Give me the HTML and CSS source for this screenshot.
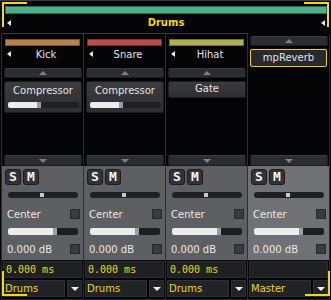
FILE: index.html
```html
<!DOCTYPE html>
<html>
<head>
<link rel="stylesheet" href="styles.css">
</head>
<body>

<div class="mixer">
  <!-- 总线标题 -->
  <div class="bus-head">
    <div class="bus-color"></div>
    <div class="bus-name">
      <span class="arrow-left"></span>
      <span class="bus-title">Drums</span>
      <span class="arrow-left"></span>
    </div>
  </div>

  <!-- 通道条 -->
  <div class="strips">
    <div class="strip">
      <div class="strip-top">
        <div class="color-bar" style="background:#b6814f"></div>
        <div class="name-row"><span class="arrow-left"></span><span class="name">Kick</span></div>
        <div class="scroll-btn"><span class="tri-up"></span></div>
        <div class="fx-btn">
          <span class="fx-name">Compressor</span>
          <div class="fx-slider"><div class="fill" style="width:29px"></div><div class="knob"></div></div>
        </div>
        <div class="spacer"></div>
        <div class="scroll-btn down"><span class="tri-down"></span></div>
      </div>
      <div class="panel">
        <div class="sm-row"><span class="sm-btn">S</span><span class="sm-btn">M</span></div>
        <div class="pan-slider"><div class="pan-knob"></div></div>
        <div class="param-row"><span>Center</span><span class="check"></span></div>
        <div class="vol-slider"><div class="fill" style="width:45px"></div><div class="knob"></div></div>
        <div class="param-row"><span>0.000 dB</span><span class="check"></span></div>
      </div>
      <div class="delay-box">0.000 ms</div>
      <div class="route"><span class="route-name">Drums</span><span class="route-btn"><span class="tri-down white"></span></span></div>
    </div>

    <div class="strip">
      <div class="strip-top">
        <div class="color-bar" style="background:#b84d4d"></div>
        <div class="name-row"><span class="arrow-left"></span><span class="name">Snare</span></div>
        <div class="scroll-btn"><span class="tri-up"></span></div>
        <div class="fx-btn">
          <span class="fx-name">Compressor</span>
          <div class="fx-slider"><div class="fill" style="width:29px"></div><div class="knob"></div></div>
        </div>
        <div class="spacer"></div>
        <div class="scroll-btn down"><span class="tri-down"></span></div>
      </div>
      <div class="panel">
        <div class="sm-row"><span class="sm-btn">S</span><span class="sm-btn">M</span></div>
        <div class="pan-slider"><div class="pan-knob"></div></div>
        <div class="param-row"><span>Center</span><span class="check"></span></div>
        <div class="vol-slider"><div class="fill" style="width:45px"></div><div class="knob"></div></div>
        <div class="param-row"><span>0.000 dB</span><span class="check"></span></div>
      </div>
      <div class="delay-box">0.000 ms</div>
      <div class="route"><span class="route-name">Drums</span><span class="route-btn"><span class="tri-down white"></span></span></div>
    </div>

    <div class="strip">
      <div class="strip-top">
        <div class="color-bar" style="background:#aeb04c"></div>
        <div class="name-row"><span class="arrow-left"></span><span class="name">Hihat</span></div>
        <div class="scroll-btn"><span class="tri-up"></span></div>
        <div class="fx-btn short">
          <span class="fx-name">Gate</span>
        </div>
        <div class="spacer"></div>
        <div class="scroll-btn down"><span class="tri-down"></span></div>
      </div>
      <div class="panel">
        <div class="sm-row"><span class="sm-btn">S</span><span class="sm-btn">M</span></div>
        <div class="pan-slider"><div class="pan-knob"></div></div>
        <div class="param-row"><span>Center</span><span class="check"></span></div>
        <div class="vol-slider"><div class="fill" style="width:45px"></div><div class="knob"></div></div>
        <div class="param-row"><span>0.000 dB</span><span class="check"></span></div>
      </div>
      <div class="delay-box">0.000 ms</div>
      <div class="route"><span class="route-name">Drums</span><span class="route-btn"><span class="tri-down white"></span></span></div>
    </div>

    <div class="strip master">
      <div class="strip-top">
        <div class="scroll-btn"><span class="tri-up"></span></div>
        <div class="fx-btn selected">
          <span class="fx-name">mpReverb</span>
        </div>
        <div class="spacer"></div>
        <div class="scroll-btn down"><span class="tri-down"></span></div>
      </div>
      <div class="panel">
        <div class="sm-row"><span class="sm-btn">S</span><span class="sm-btn">M</span></div>
        <div class="pan-slider"><div class="pan-knob"></div></div>
        <div class="param-row"><span>Center</span><span class="check"></span></div>
        <div class="vol-slider"><div class="fill" style="width:45px"></div><div class="knob"></div></div>
        <div class="param-row"><span>0.000 dB</span><span class="check"></span></div>
      </div>
      <div class="delay-box"></div>
      <div class="route"><span class="route-name">Master</span><span class="route-btn"><span class="tri-down white"></span></span></div>
    </div>
  </div>

  <!-- 选中框角标 -->
  <div class="corner tl"></div>
  <div class="corner tr"></div>
  <div class="corner bl"></div>
  <div class="corner br"></div>
</div>

</body>
</html>
```

FILE: styles.css
```css
/* 主样式 */
body {
  margin: 0;
  background: #040406;
}
.mixer {
  position: relative;
  width: 331px;
  height: 300px;
  background: #040406;
  border-top: 1px solid #3a3b3e;
  box-sizing: border-box;
  font-family: "DejaVu Sans", sans-serif;
  font-size: 10px;
  color: #e4e4e4;
  overflow: hidden;
}

/* 总线标题 */
.bus-head {
  height: 32px;
  padding-top: 5px;
  box-sizing: border-box;
}
.bus-color {
  height: 8px;
  margin: 0 4px 0 5px;
  background: #4fae8b;
  border: 1px solid #2c6a53;
  box-sizing: border-box;
}
.bus-name {
  display: flex;
  align-items: center;
  justify-content: space-between;
  height: 17px;
  padding: 0 6px 0 7px;
}
.bus-title {
  color: #f2d619;
  font-weight: bold;
}

/* 三角形 */
.arrow-left {
  width: 0;
  height: 0;
  border-top: 3px solid transparent;
  border-bottom: 3px solid transparent;
  border-right: 4px solid #e8e8e8;
}
.tri-up {
  width: 0;
  height: 0;
  border-left: 4px solid transparent;
  border-right: 4px solid transparent;
  border-bottom: 4px solid #808184;
}
.tri-down {
  width: 0;
  height: 0;
  border-left: 4px solid transparent;
  border-right: 4px solid transparent;
  border-top: 4px solid #808184;
}
.tri-down.white {
  border-left-width: 4px;
  border-right-width: 4px;
  border-top: 4px solid #f0f0f0;
}

/* 通道条 */
.strips {
  display: flex;
  margin-left: 1px;
  border-left: 1px solid #2e2f32;
}
.strip {
  width: 81px;
  height: 265px;
  border-right: 1px solid #2e2f32;
  border-top: 1px solid #3a3b3e;
  border-bottom: 1px solid #2a2b2e;
  display: flex;
  flex-direction: column;
}
.strip.master {
  border-top-color: #040406;
}
.strip-top {
  height: 132px;
  display: flex;
  flex-direction: column;
}
.color-bar {
  height: 7px;
  margin: 5px 3px 0;
  border: 1px solid rgba(0, 0, 0, 0.35);
  box-sizing: border-box;
}
.name-row {
  display: flex;
  align-items: center;
  height: 16px;
  padding-left: 5px;
}
.name {
  flex: 1;
  text-align: center;
  padding-right: 2px;
}
.scroll-btn {
  height: 10px;
  margin: 6px 1px 0 2px;
  background: #2c2d30;
  border: 1px solid #1b1c1e;
  border-top-color: #3b3c3f;
  border-radius: 2px;
  display: flex;
  align-items: center;
  justify-content: center;
  box-sizing: border-box;
}
.master .scroll-btn {
  margin-top: 2px;
}
.scroll-btn.down {
  height: 11px;
  margin-top: 0;
}
.master .scroll-btn.down {
  margin-top: 0;
}
.spacer {
  flex: 1;
}

/* 效果器按钮 */
.fx-btn {
  height: 32px;
  margin: 3px 1px 0 2px;
  background: linear-gradient(#3a3b3e, #2e2f32);
  border: 1px solid #1b1c1e;
  border-radius: 2px;
  box-sizing: border-box;
  display: flex;
  flex-direction: column;
  align-items: center;
  padding-top: 3px;
}
.fx-btn.short {
  height: 17px;
  padding-top: 1px;
}
.fx-btn.selected {
  height: 18px;
  margin: 3px 2px 0 2px;
  border: 1px solid #ecd21c;
  background: #28292c;
  padding-top: 2px;
}
.fx-slider {
  position: relative;
  display: flex;
  width: 71px;
  height: 6px;
  margin-top: 6px;
  background: #1f2023;
  border-radius: 2px;
  overflow: hidden;
}
.fill {
  background: #ececec;
}
.knob {
  width: 4px;
  background: #9c9d9f;
}

/* 下方控制面板 */
.panel {
  height: 94px;
  background: #5e5f63;
  padding: 3px 3px 0;
  box-sizing: border-box;
}
.master .panel {
  background: #707175;
}
.sm-row {
  display: flex;
  gap: 2px;
}
.sm-btn {
  width: 16px;
  height: 16px;
  box-sizing: border-box;
  background: #323336;
  border: 1px solid #1c1c1e;
  border-radius: 3px;
  color: #f4f4f4;
  font-family: "DejaVu Sans Mono", monospace;
  font-weight: bold;
  font-size: 13px;
  line-height: 14px;
  text-align: center;
}
.pan-slider {
  position: relative;
  height: 6px;
  margin: 7px 2px 0 3px;
  background: #1f2022;
  border-radius: 3px;
}
.pan-knob {
  position: absolute;
  left: 32px;
  top: 1px;
  width: 4px;
  height: 4px;
  background: #c9c9c9;
}
.param-row {
  display: flex;
  align-items: center;
  justify-content: space-between;
  height: 16px;
  margin-top: 8px;
  padding-left: 2px;
  color: #e8e8e8;
}
.vol-slider + .param-row {
  margin-top: 6px;
}
.check {
  width: 10px;
  height: 10px;
  box-sizing: border-box;
  background: #3a3b3e;
  border: 1px solid #27282a;
}
.vol-slider {
  display: flex;
  height: 7px;
  margin: 6px 2px 0 3px;
  background: #1d1e20;
  border-radius: 2px;
  overflow: hidden;
}

/* 延迟与路由 */
.delay-box {
  height: 17px;
  margin: 1px 1px 0;
  background: #1f2022;
  border: 1px solid #2b2c2f;
  box-sizing: border-box;
  color: #f0d619;
  font-family: "DejaVu Sans Mono", monospace;
  font-size: 10px;
  line-height: 15px;
  padding-left: 2px;
}
.route {
  display: flex;
  gap: 2px;
  height: 17px;
  margin: 2px 1px 0;
}
.route-name {
  flex: 1;
  background: #222326;
  border: 1px solid #2e2f32;
  color: #f0d619;
  line-height: 15px;
  padding-left: 1px;
}
.route-btn {
  width: 13px;
  background: #222326;
  border: 1px solid #2e2f32;
  display: flex;
  align-items: center;
  justify-content: center;
}

/* 角标 */
.corner {
  position: absolute;
  width: 23px;
  height: 23px;
  border: 0 solid #f2d619;
}
.corner.tl { left: 2px; top: 1px; border-left-width: 2px; border-top-width: 2px; }
.corner.tr { right: 2px; top: 1px; border-right-width: 2px; border-top-width: 2px; }
.corner.bl { left: 2px; bottom: 4px; border-left-width: 2px; border-bottom-width: 2px; }
.corner.br { right: 1px; bottom: 4px; border-right-width: 2px; border-bottom-width: 2px; }
```
